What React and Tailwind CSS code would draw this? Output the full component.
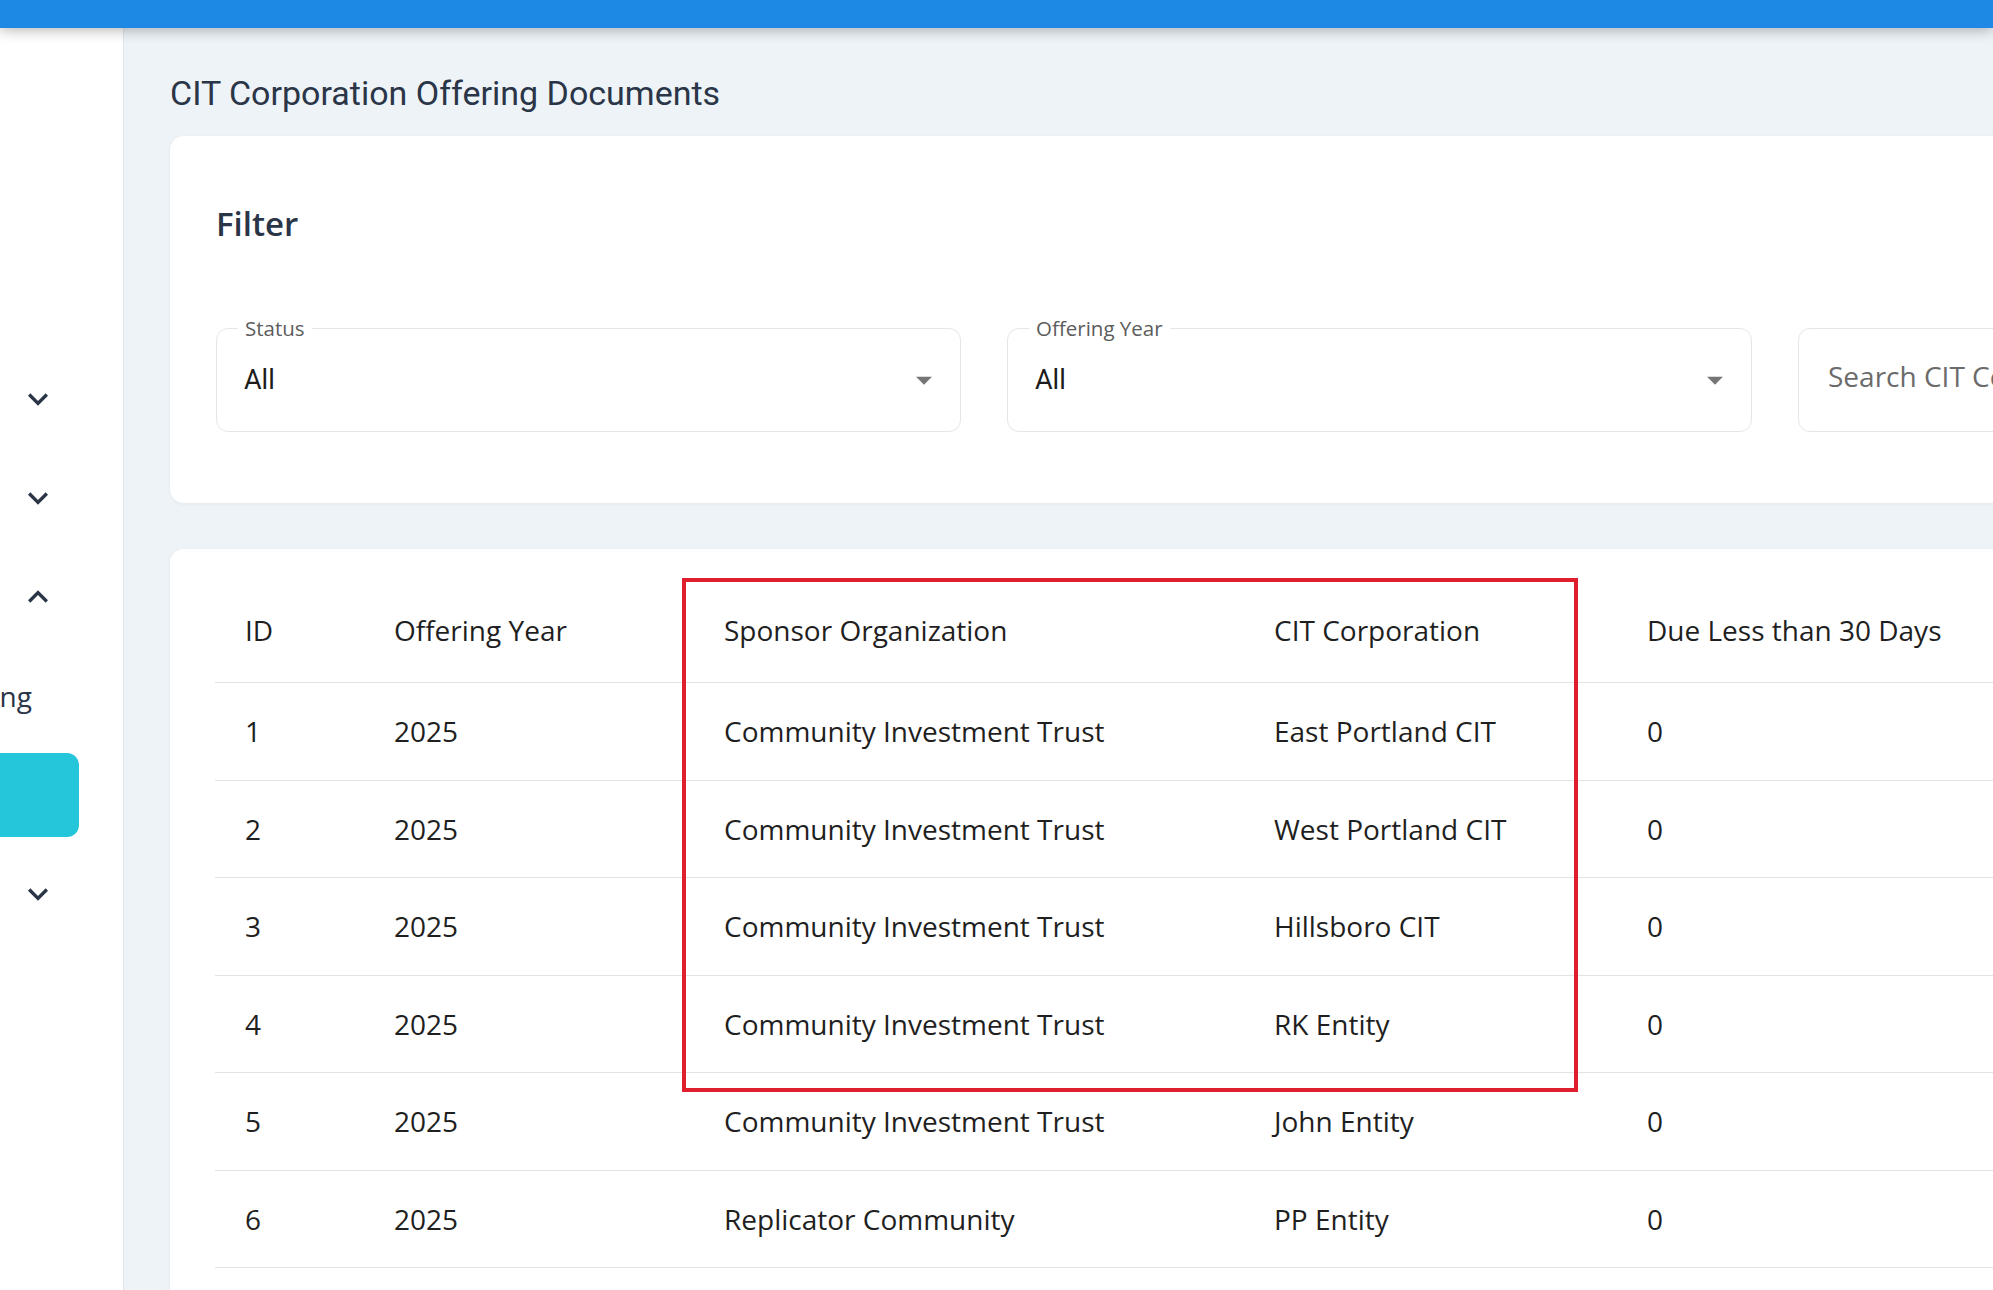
import React from 'react'

const ROWS = [
  { id: 1, year: 2025, sponsor: 'Community Investment Trust', cit: 'East Portland CIT', due: 0 },
  { id: 2, year: 2025, sponsor: 'Community Investment Trust', cit: 'West Portland CIT', due: 0 },
  { id: 3, year: 2025, sponsor: 'Community Investment Trust', cit: 'Hillsboro CIT', due: 0 },
  { id: 4, year: 2025, sponsor: 'Community Investment Trust', cit: 'RK Entity', due: 0 },
  { id: 5, year: 2025, sponsor: 'Community Investment Trust', cit: 'John Entity', due: 0 },
  { id: 6, year: 2025, sponsor: 'Replicator Community', cit: 'PP Entity', due: 0 },
]

function ExpandIcon({ up }) {
  return (
    <svg width="40" height="40" viewBox="0 0 24 24" className={up ? 'rotate-180 shrink-0' : 'shrink-0'} fill="#2a3547">
      <path d="M16.59 8.59 12 13.17 7.41 8.59 6 10l6 6 6-6z" />
    </svg>
  )
}

function ArrowDrop() {
  return (
    <svg width="38" height="38" viewBox="0 0 24 24" fill="#757575" className="shrink-0">
      <path d="M7 10l5 5 5-5z" />
    </svg>
  )
}

function SideItem({ up }) {
  return (
    <div className="h-[99px] flex items-center justify-end pr-[65px]">
      <ExpandIcon up={up} />
    </div>
  )
}

// sidebar is scrolled horizontally, only its right part shows
function Sidebar() {
  return (
    <aside className="w-[124px] shrink-0 h-[1262px] bg-white border-r border-[#dde4ea] overflow-hidden pt-[321px] font-['Open_Sans',sans-serif]">
      <SideItem />
      <SideItem />
      <SideItem up />
      <div className="h-[99px] flex items-center justify-end pr-[91px]">
        <span className="whitespace-nowrap text-[28px] text-[#2a3547]">Reporting</span>
      </div>
      <div className="h-[99px] flex items-center justify-end pr-[44px]">
        <div className="h-[84px] w-[300px] shrink-0 rounded-[12px] bg-[#26c6da]" />
      </div>
      <SideItem />
    </aside>
  )
}

function SelectBox({ label, value }) {
  return (
    <div className="relative h-[104px] border border-[#e3e6ea] rounded-[12px] flex items-center justify-between pl-[27px] pr-[17px]">
      <span className="absolute -top-[14px] left-[21px] px-[7px] bg-white text-[20.5px] leading-[26px] text-[#5c5c5c] font-['Open_Sans',sans-serif]">
        {label}
      </span>
      <span className="text-[27px] text-[#1c1c1c] font-['Roboto',sans-serif]">{value}</span>
      <ArrowDrop />
    </div>
  )
}

const COLS = ['w-[149px]', 'w-[330px]', 'w-[550px]', 'w-[373px]', 'w-[400px]']

function Row({ cells, header }) {
  return (
    <div className={`flex items-center border-b border-[#e3e3e3] ${header ? 'h-[106px]' : 'h-[97.5px]'}`}>
      {cells.map((c, i) => (
        <div key={i} className={`${COLS[i]} shrink-0 pl-[30px] whitespace-nowrap`}>{c}</div>
      ))}
    </div>
  )
}

export default function App() {
  return (
    <div className="relative w-[1993px] h-[1290px] overflow-hidden bg-[#edf3f7]">
      <header className="relative z-10 h-[28px] bg-[#1e88e5] shadow-[0_2px_14px_rgba(0,0,0,0.3)]" />

      <div className="flex">
        <Sidebar />

        <main className="flex-1 pl-[46px] pt-[45px]">
          <h1 className="text-[34px] leading-[40px] text-[#2a3547] font-['Roboto',sans-serif]">
            CIT Corporation Offering Documents
          </h1>

          {/* Filter card */}
          <section className="mt-[23px] w-[2419px] bg-white rounded-[14px] shadow-[0_1px_4px_rgba(0,0,0,0.05)] px-[46px] pt-[68px] pb-[71px]">
            <h2 className="text-[33px] leading-[40px] font-semibold text-[#2a3547] font-['Open_Sans',sans-serif]">Filter</h2>
            <div className="mt-[84px] grid grid-cols-3 gap-[46px]">
              <SelectBox label="Status" value="All" />
              <SelectBox label="Offering Year" value="All" />
              <div className="h-[104px] border border-[#e3e6ea] rounded-[12px] flex items-center pl-[29px] pb-[8px] text-[28px] text-[#6b6b6b] font-['Open_Sans',sans-serif] whitespace-nowrap">
                Search CIT Corporation
              </div>
            </div>
          </section>

          {/* Table card */}
          <section className="mt-[46px] w-[2419px] h-[800px] bg-white rounded-[14px] shadow-[0_1px_4px_rgba(0,0,0,0.05)] px-[45px] pt-[28px] text-[28px] text-[#1f1f1f] font-['Open_Sans',sans-serif]">
            <Row header cells={['ID', 'Offering Year', 'Sponsor Organization', 'CIT Corporation', 'Due Less than 30 Days']} />
            {ROWS.map(r => (
              <Row key={r.id} cells={[r.id, r.year, r.sponsor, r.cit, r.due]} />
            ))}
          </section>
        </main>
      </div>

      {/* highlight annotation */}
      <div className="absolute left-[682px] top-[578px] w-[896px] h-[514px] border-4 border-[#df1f2d] pointer-events-none" />
    </div>
  )
}
